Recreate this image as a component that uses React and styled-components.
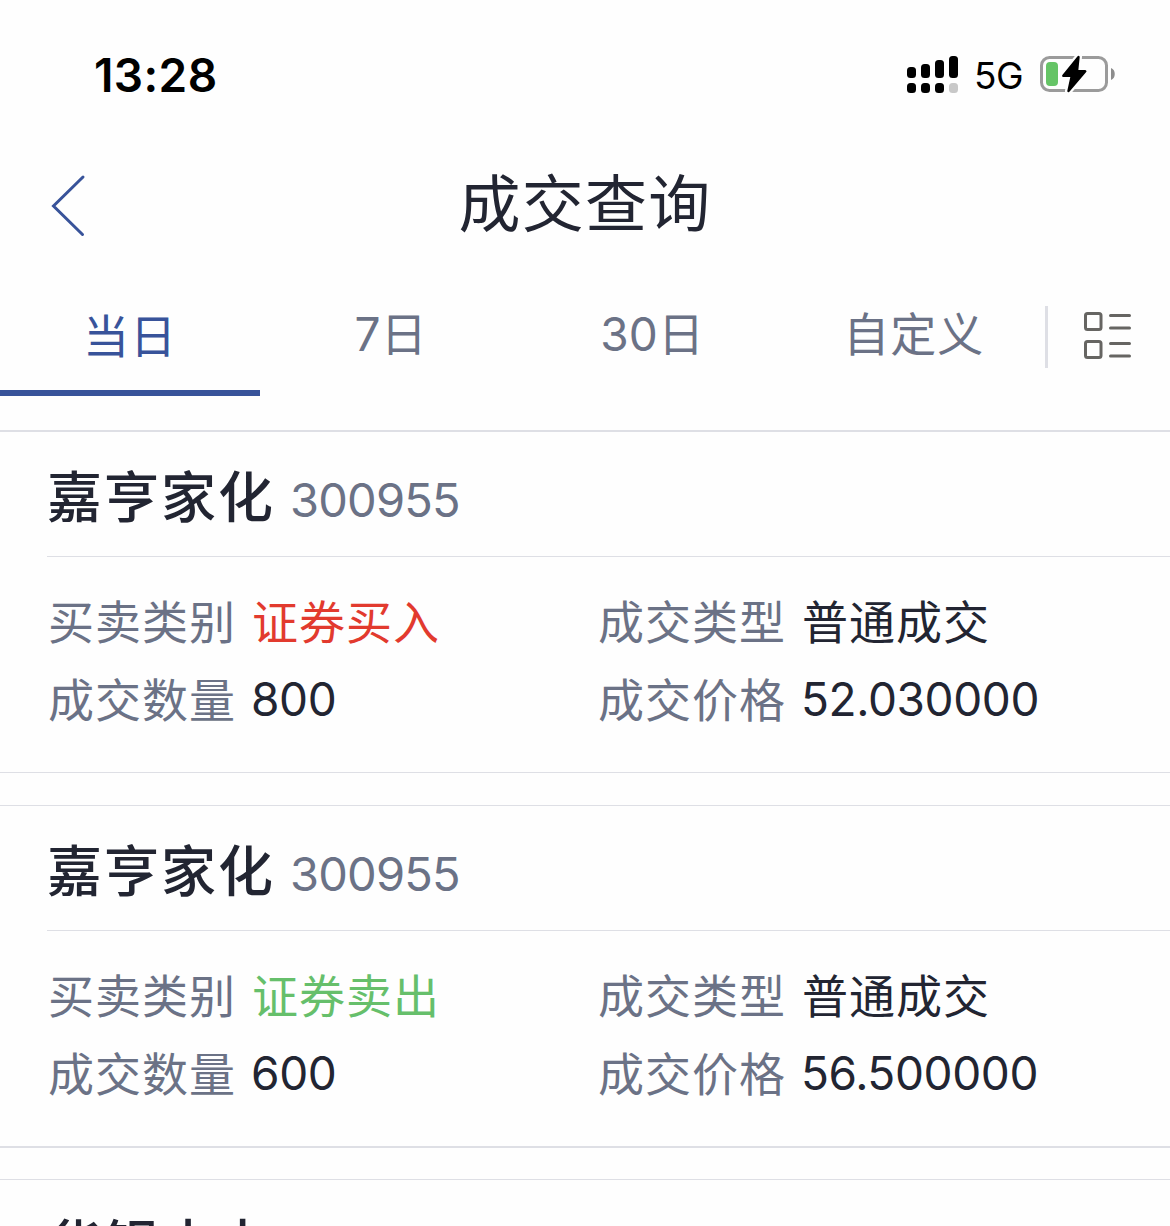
import React from 'react';
import styled, { createGlobalStyle } from 'styled-components';

const GlobalStyle = createGlobalStyle`
  * {
    box-sizing: border-box;
  }

  body {
    margin: 0;
    background: #fefefe;
    font-family: Inter, "Noto Sans CJK SC", sans-serif;
  }
`;

const Screen = styled.div`
  width: 1170px;
  height: 1226px;
  overflow: hidden;
  background: #fefefe;
  color: #222532;
`;

const StatusBar = styled.div`
  display: flex;
  align-items: center;
  justify-content: space-between;
  height: 150px;
  padding: 0 54px 0 94px;
  color: #000;
`;

const Time = styled.span`
  font-size: 46px;
  font-weight: 600;
  line-height: 60px;
  letter-spacing: 0.4px;
`;

const StatusIcons = styled.div`
  display: flex;
  align-items: center;
`;

const Network = styled.span`
  width: 65px;
  padding: 2px 0 0 15px;
  font-size: 37px;
  line-height: 44px;
  letter-spacing: -0.6px;
`;

const BatteryIcon = styled.svg`
  margin-left: 16px;
`;

const NavBar = styled.header`
  display: grid;
  grid-template-columns: 120px 1fr 120px;
  align-items: center;
  height: 110px;
`;

const BackButton = styled.button`
  display: flex;
  padding: 1px 0 0 48px;
  border: 0;
  background: none;
`;

const Title = styled.h1`
  margin: 0;
  font-size: 62px;
  font-weight: 400;
  line-height: 90px;
  letter-spacing: 1.3px;
  text-align: center;
`;

const TabBar = styled.nav`
  display: flex;
  height: 170px;
  padding-top: 36px;
`;

const Tab = styled.div`
  width: ${({ $active }) => ($active ? '260px' : '261.5px')};
  height: 100px;
  padding-top: ${({ $active }) => ($active ? '5px' : '3px')};
  border-bottom: 6px solid ${({ $active }) => ($active ? '#38539a' : 'transparent')};
  color: ${({ $active }) => ($active ? '#38539a' : '#6b7286')};
  font-size: 46px;
  line-height: 70px;
  letter-spacing: ${({ $number }) => ($number ? '0.2px' : '1px')};
  text-align: center;
`;

const TabDivider = styled.span`
  width: 3px;
  height: 62px;
  margin-top: 10px;
  background: #dedfe5;
`;

const ViewButton = styled.button`
  display: flex;
  align-items: flex-start;
  padding: 14px 0 0 34px;
  border: 0;
  background: none;
`;

const Card = styled.section`
  height: ${({ $top, $bottom }) => 340 + $top + $bottom}px;
  margin-bottom: ${({ $gap }) => $gap}px;
  border-top: ${({ $top }) => $top}px solid #dedfe5;
  border-bottom: ${({ $bottom }) => $bottom}px solid #dedfe5;
`;

const CardHead = styled.div`
  display: flex;
  align-items: baseline;
  height: 125px;
  margin-left: 47px;
  padding-top: 25px;
  border-bottom: 1px solid #dedfe5;
  line-height: 80px;
`;

const StockName = styled.h2`
  width: 243px;
  margin: 0;
  font-size: 55px;
  font-weight: 500;
  letter-spacing: 2px;
`;

const StockCode = styled.span`
  padding-top: 1px;
  color: #6b7286;
  font-size: 47px;
  letter-spacing: -0.8px;
`;

const CardBody = styled.div`
  display: grid;
  grid-template-columns: 550px 1fr;
  grid-auto-rows: 78px;
  padding: 26px 0 0 48px;
`;

const Field = styled.div`
  display: flex;
  font-size: 46px;
  line-height: 78px;
`;

const Label = styled.span`
  width: ${({ $number }) => ($number ? '203px' : '204px')};
  color: #6b7286;
  letter-spacing: 1px;
`;

const valueColors = {
  buy: '#e23a2e',
  sell: '#66bf6b',
};

const Value = styled.span`
  color: ${({ $kind }) => valueColors[$kind] || '#222532'};
  letter-spacing: 1px;
`;

const NumberValue = styled(Value)`
  line-height: 76px;
  letter-spacing: -0.4px;
`;

const tabs = ['当日', '7日', '30日', '自定义'];

const trades = [
  {
    name: '嘉亨家化',
    code: '300955',
    top: 2,
    bottom: 1,
    gap: 32,
    kind: 'buy',
    category: '证券买入',
    type: '普通成交',
    amount: '800',
    price: '52.030000',
  },
  {
    name: '嘉亨家化',
    code: '300955',
    top: 1,
    bottom: 2,
    gap: 31,
    kind: 'sell',
    category: '证券卖出',
    type: '普通成交',
    amount: '600',
    price: '56.500000',
  },
];

const SignalIcon = () => (
  <svg width="52" height="40" viewBox="0 0 52 40">
    <rect x="0" y="12" width="9" height="11" rx="3.5" />
    <rect x="14" y="9" width="9" height="14" rx="3.5" />
    <rect x="28" y="5" width="9" height="18" rx="3.5" />
    <rect x="42" y="1" width="9" height="22" rx="3.5" />
    <rect x="0" y="28" width="9" height="10" rx="3.5" />
    <rect x="14" y="28" width="9" height="10" rx="3.5" />
    <rect x="28" y="28" width="9" height="10" rx="3.5" />
    <rect x="42" y="28" width="9" height="10" rx="3.5" fill="#c8c8c8" />
  </svg>
);

const Battery = () => (
  <BatteryIcon width="76" height="40" viewBox="0 0 76 40">
    <rect x="1.5" y="2.5" width="65" height="33" rx="8" fill="none" stroke="#9b9b9b" strokeWidth="3" />
    <rect x="6" y="7" width="12" height="24" rx="4" fill="#65c466" />
    <path d="M71 13C76 14.5 76 23.5 71 25Z" fill="#8d8d8d" />
    <path
      d="M38.5 2L23.5 20.5H31.5L28.5 36L45 16.5H37Z"
      fill="#fefefe"
      stroke="#fefefe"
      strokeWidth="7"
      strokeLinejoin="round"
    />
    <path
      d="M38.5 2L23.3 20.8H31.8L28.5 36L45.3 16.3H37Z"
      fill="#000"
      stroke="#000"
      strokeWidth="2.4"
      strokeLinejoin="round"
    />
  </BatteryIcon>
);

const BackIcon = () => (
  <svg width="40" height="66" viewBox="0 0 40 66">
    <path
      d="M35 4L5.5 33L34.5 61.5"
      fill="none"
      stroke="#38539a"
      strokeWidth="3"
      strokeLinecap="round"
    />
  </svg>
);

const ListIcon = () => (
  <svg width="50" height="56" viewBox="0 0 50 56" fill="none" stroke="#666562" strokeWidth="3">
    <rect x="3.5" y="3.5" width="15.5" height="16" rx="2" />
    <rect x="3.5" y="31.5" width="15.5" height="16" rx="2" />
    <path d="M28.5 5.5H47.5M28.5 18H47.5M28.5 33.5H47.5M28.5 46H47.5" strokeLinecap="round" />
  </svg>
);

const TradeCard = ({ trade }) => (
  <Card $top={trade.top} $bottom={trade.bottom} $gap={trade.gap}>
    <CardHead>
      <StockName>{trade.name}</StockName>
      <StockCode>{trade.code}</StockCode>
    </CardHead>
    <CardBody>
      <Field>
        <Label>买卖类别</Label>
        <Value $kind={trade.kind}>{trade.category}</Value>
      </Field>
      <Field>
        <Label>成交类型</Label>
        <Value>{trade.type}</Value>
      </Field>
      <Field>
        <Label $number>成交数量</Label>
        <NumberValue>{trade.amount}</NumberValue>
      </Field>
      <Field>
        <Label $number>成交价格</Label>
        <NumberValue>{trade.price}</NumberValue>
      </Field>
    </CardBody>
  </Card>
);

const App = () => {
  return (
    <Screen>
      <GlobalStyle />
      <StatusBar>
        <Time>13:28</Time>
        <StatusIcons>
          <SignalIcon />
          <Network>5G</Network>
          <Battery />
        </StatusIcons>
      </StatusBar>
      <NavBar>
        <BackButton>
          <BackIcon />
        </BackButton>
        <Title>成交查询</Title>
      </NavBar>
      <TabBar>
        {tabs.map((tab, idx) => (
          <Tab key={tab} $active={idx === 0} $number={/\d/.test(tab)}>
            {tab}
          </Tab>
        ))}
        <TabDivider />
        <ViewButton>
          <ListIcon />
        </ViewButton>
      </TabBar>
      {trades.map((trade, idx) => (
        <TradeCard key={idx} trade={trade} />
      ))}
      <Card $top={1} $bottom={1} $gap={0}>
        <CardHead>
          <StockName>华银电力</StockName>
        </CardHead>
      </Card>
    </Screen>
  );
};

export default App;
